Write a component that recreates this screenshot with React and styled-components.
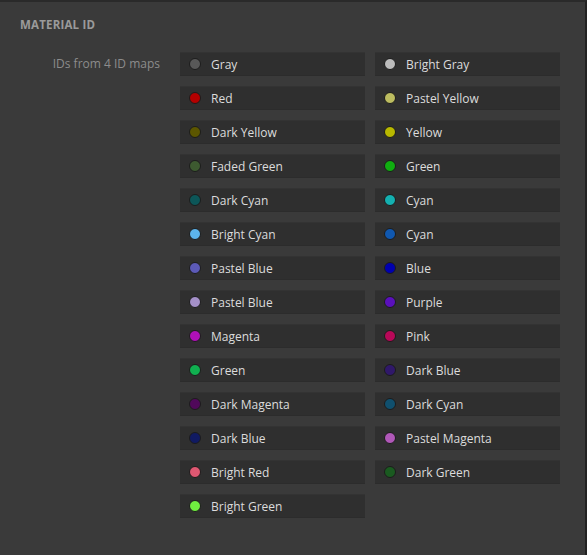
import React from "react";
import styled, { createGlobalStyle } from "styled-components";

const Global = createGlobalStyle`
  html, body { margin: 0; padding: 0; background: #3a3a3a; }
  body { font-family: "Open Sans", "Noto Sans", sans-serif; }
`;

const Panel = styled.div`
  box-sizing: border-box;
  width: 587px;
  height: 555px;
  background: #3a3a3a;
  border-top: 2px solid #2a2a2a;
  border-right: 2px solid #222;
  padding: 16px 0 0 20px;
`;

const Heading = styled.div`
  font-size: 11.5px;
  line-height: 14px;
  font-weight: 700;
  color: #9a9a9a;
  letter-spacing: 0.2px;
  text-transform: uppercase;
`;

const Body = styled.div`
  display: flex;
  gap: 20px;
  margin-top: 20px;
`;

const Label = styled.div`
  width: 140px;
  text-align: right;
  font-size: 12px;
  line-height: 24px;
  height: 24px;
  color: #8c8c8c;
`;

const Grid = styled.div`
  display: grid;
  grid-template-columns: 185px 185px;
  grid-auto-rows: 24px;
  column-gap: 10px;
  row-gap: 10px;
`;

const Cell = styled.div`
  display: flex;
  align-items: center;
  gap: 10px;
  padding-left: 9px;
  background: #2f2f2f;
  box-shadow: inset 0 1px 0 #333, inset 0 -1px 0 #2c2c2c;
  font-size: 12px;
  color: #dcdcdc;
  white-space: nowrap;
`;

const Dot = styled.span`
  box-sizing: border-box;
  width: 12px;
  height: 12px;
  border-radius: 50%;
  background: ${(p) => p.$c};
  border: 1px solid #1c1c1c;
  flex: none;
`;

const items = [
  ["Gray", "#585858"], ["Bright Gray", "#bcbcbc"],
  ["Red", "#b40000"], ["Pastel Yellow", "#bcbc60"],
  ["Dark Yellow", "#5c5600"], ["Yellow", "#b8b800"],
  ["Faded Green", "#3d5a30"], ["Green", "#10ae10"],
  ["Dark Cyan", "#0c5658"], ["Cyan", "#14b0b0"],
  ["Bright Cyan", "#5cb4ec"], ["Cyan", "#1058b0"],
  ["Pastel Blue", "#5c5ab8"], ["Blue", "#0000b0"],
  ["Pastel Blue", "#a490c8"], ["Purple", "#5a10bc"],
  ["Magenta", "#b010b8"], ["Pink", "#b80858"],
  ["Green", "#10b050"], ["Dark Blue", "#30186a"],
  ["Dark Magenta", "#50085a"], ["Dark Cyan", "#10506e"],
  ["Dark Blue", "#101a62"], ["Pastel Magenta", "#b058b8"],
  ["Bright Red", "#e05872"], ["Dark Green", "#1a5a20"],
  ["Bright Green", "#70f040"],
];

export default function App() {
  return (
    <>
      <Global />
      <Panel>
        <Heading>Material ID</Heading>
        <Body>
          <Label>IDs from 4 ID maps</Label>
          <Grid>
            {items.map(([name, c], i) => (
              <Cell key={i}>
                <Dot $c={c} />
                {name}
              </Cell>
            ))}
          </Grid>
        </Body>
      </Panel>
    </>
  );
}
